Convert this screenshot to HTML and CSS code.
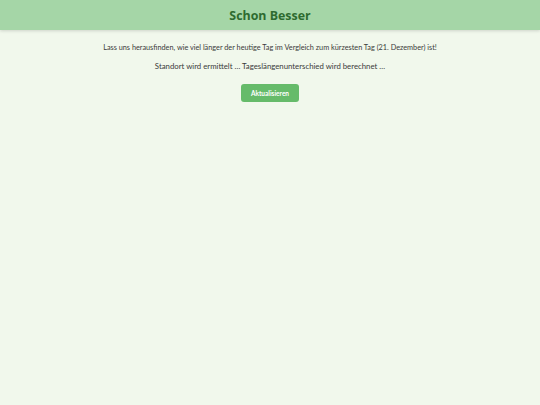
FILE: index.html
```html
<!DOCTYPE html>
<html lang="de">
<head>
<meta charset="utf-8">
<link rel="stylesheet" href="styles.css">
</head>
<body>
<header class="top">
  <h1 class="title">Schon Besser</h1>
</header>
<main class="content">
  <p class="intro">Lass uns herausfinden, wie viel länger der heutige Tag im Vergleich zum kürzesten Tag (21. Dezember) ist!</p>
  <p class="status">Standort wird ermittelt … Tageslängenunterschied wird berechnet …</p>
  <button class="refresh">Aktualisieren</button>
</main>
</body>
</html>
```
FILE: styles.css
```css
html, body {
  margin: 0;
  padding: 0;
  background: #f1f8ec;
  height: 100%;
}
body {
  font-family: "Lato", "Open Sans", sans-serif;
  color: #333;
}
.top {
  background: #a5d6a7;
  height: 30px;
  display: flex;
  align-items: center;
  justify-content: center;
  box-shadow: 0 1px 3px rgba(0,0,0,0.15);
}
.title {
  margin: 0;
  font-family: "Open Sans", sans-serif;
  font-weight: 700;
  font-size: 12.4px;
  color: #2e6b30;
}
.content {
  display: flex;
  flex-direction: column;
  align-items: center;
  padding-top: 13px;
}
.intro {
  margin: 0;
  font-size: 7.3px;
  line-height: 10px;
  color: #3a3a3a;
}
.status {
  margin: 7px 0 0;
  font-size: 7.8px;
  line-height: 12px;
  color: #3a3a3a;
}
.refresh {
  margin-top: 12px;
  background: #66bb6a;
  color: #fff;
  border: none;
  border-radius: 3px;
  font-family: "Lato", sans-serif;
  font-weight: 700;
  font-size: 6.5px;
  width: 58px;
  height: 18px;
  padding: 0;
}
```
